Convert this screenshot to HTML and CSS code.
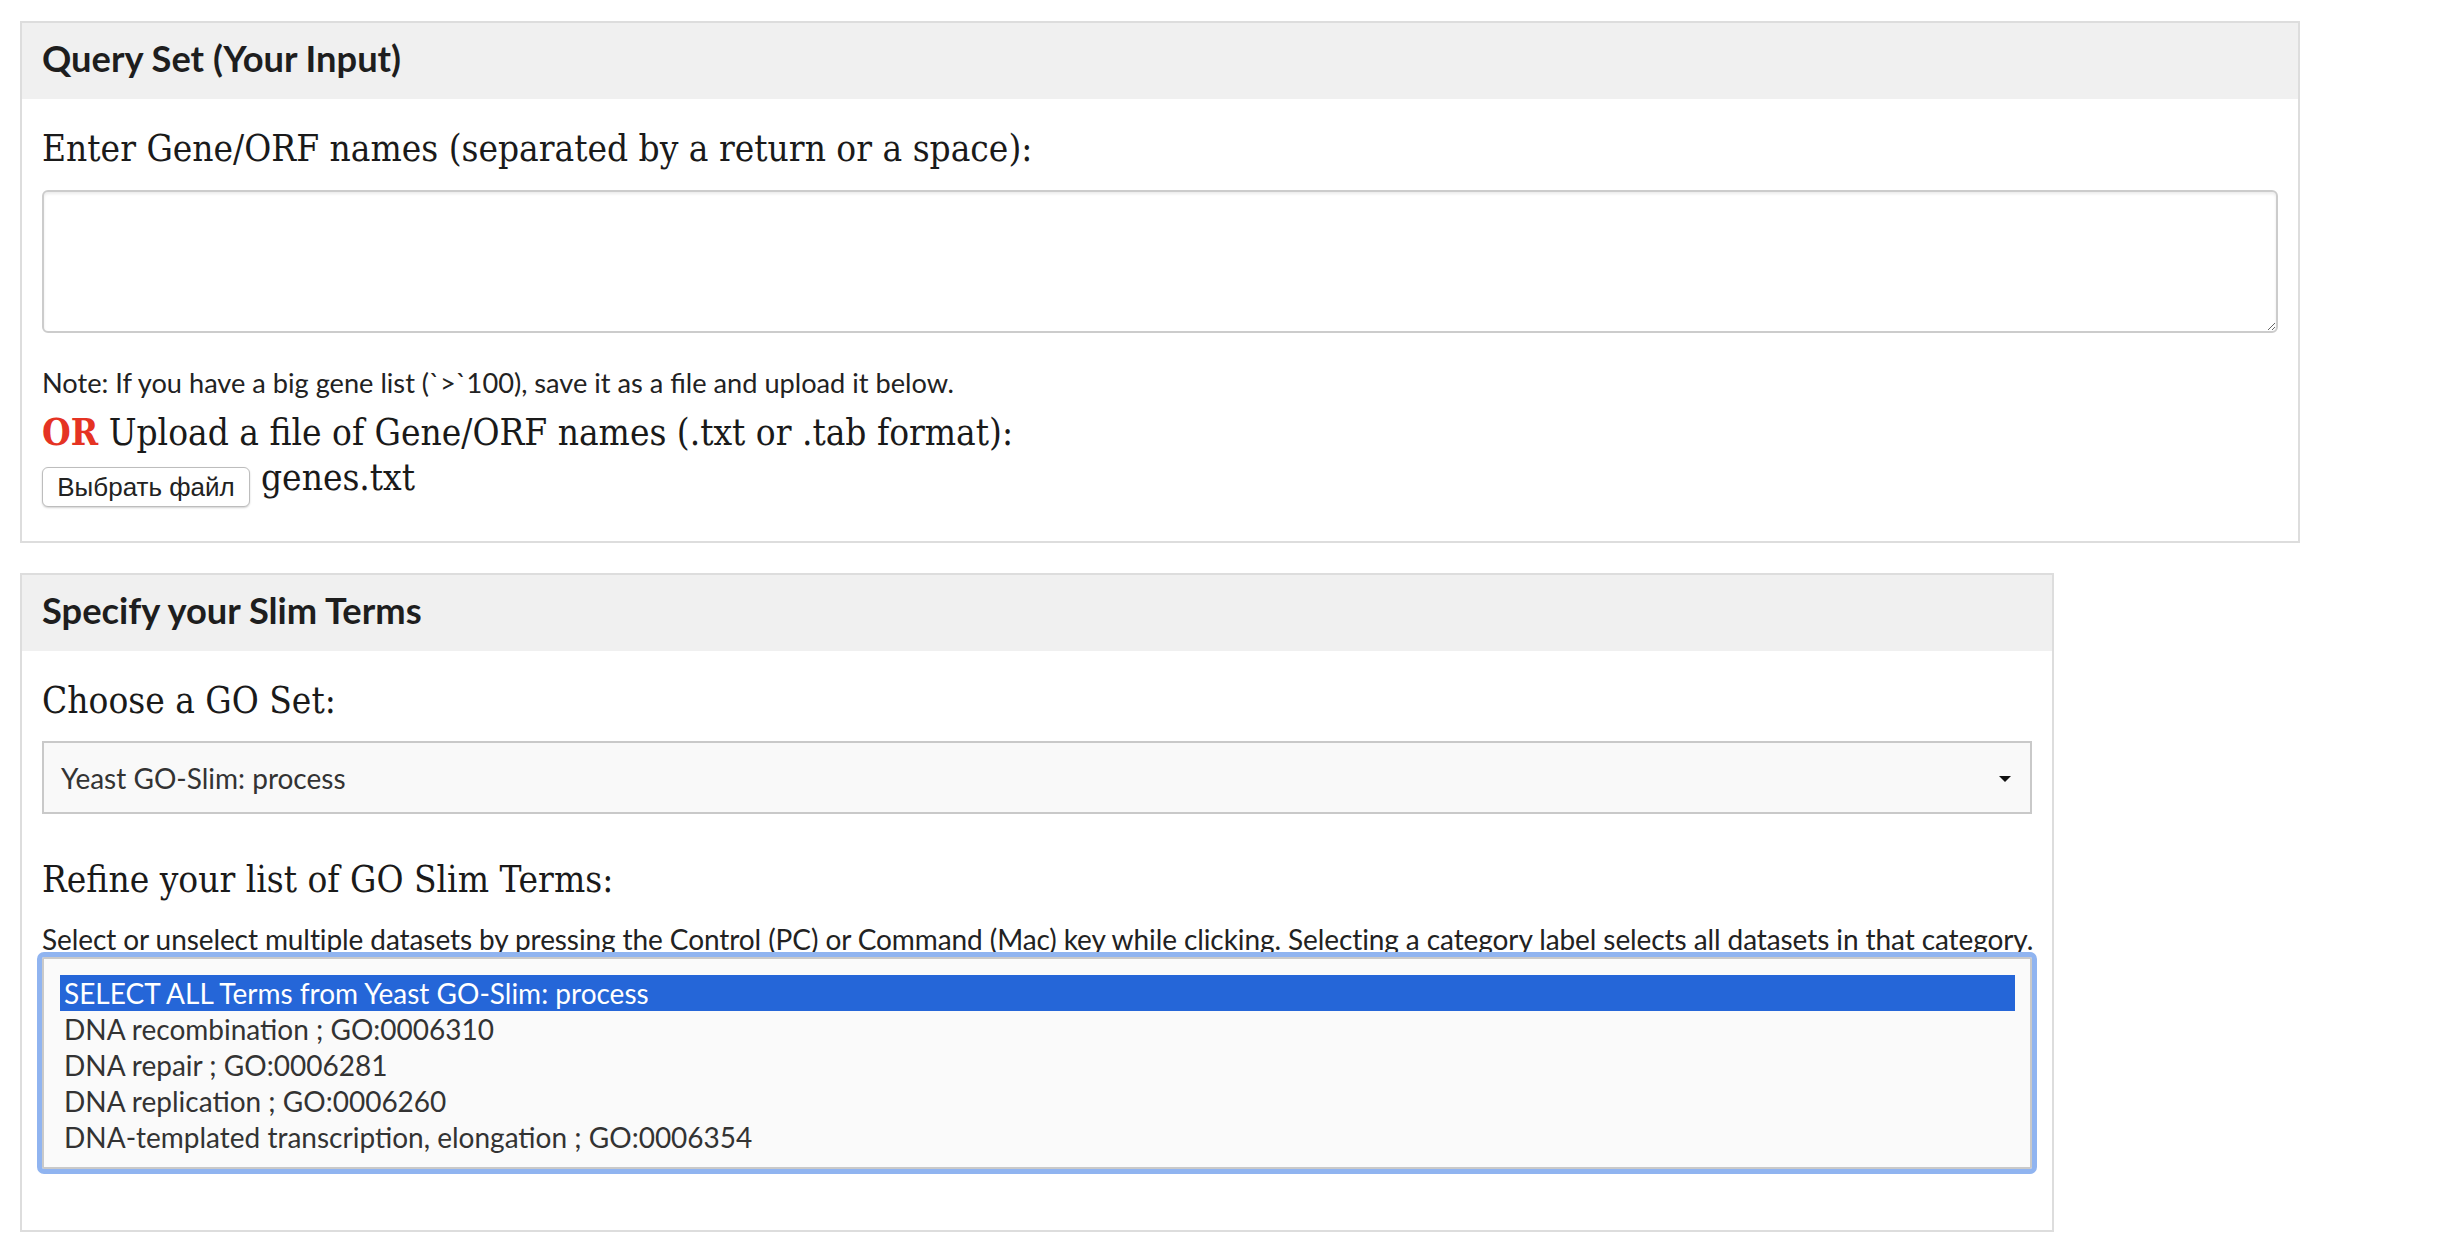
FILE: index.html
```html
<!DOCTYPE html>
<html lang="en">
<head>
<meta charset="utf-8">
<title>GO Slim Mapper</title>
<link rel="stylesheet" href="styles.css">
</head>
<body>
<div class="page">
  <section class="panel panel-query">
    <div class="panel-heading"><h3 class="panel-title">Query Set (Your Input)</h3></div>
    <div class="panel-body">
      <label class="field-label">Enter Gene/ORF names (separated by a return or a space):</label>
      <textarea class="gene-input"></textarea>
      <p class="note">Note: If you have a big gene list (`&gt;`100), save it as a file and upload it below.</p>
      <p class="field-label upload-label"><span class="or">OR</span> Upload a file of Gene/ORF names (.txt or .tab format):</p>
      <div class="file-row">
        <button class="file-btn" type="button">Выбрать файл</button>
        <span class="file-name">genes.txt</span>
      </div>
    </div>
  </section>

  <section class="panel panel-slim">
    <div class="panel-heading"><h3 class="panel-title">Specify your Slim Terms</h3></div>
    <div class="panel-body">
      <label class="field-label">Choose a GO Set:</label>
      <div class="select-box">
        <span class="select-value">Yeast GO-Slim: process</span>
        <span class="select-arrow"></span>
      </div>
      <p class="field-label refine-label">Refine your list of GO Slim Terms:</p>
      <p class="help">Select or unselect multiple datasets by pressing the Control (PC) or Command (Mac) key while clicking. Selecting a category label selects all datasets in that category.</p>
      <div class="listbox">
        <div class="option selected">SELECT ALL Terms from Yeast GO-Slim: process</div>
        <div class="option">DNA recombination ; GO:0006310</div>
        <div class="option">DNA repair ; GO:0006281</div>
        <div class="option">DNA replication ; GO:0006260</div>
        <div class="option">DNA-templated transcription, elongation ; GO:0006354</div>
      </div>
    </div>
  </section>
</div>
</body>
</html>
```

FILE: styles.css
```css
* {
  box-sizing: border-box;
}

html, body {
  margin: 0;
  padding: 0;
  background: #ffffff;
}

body {
  font-family: Lato, "Noto Sans", sans-serif;
  color: #222222;
}

.page {
  padding: 21px 0 0 20px;
  display: flex;
  flex-direction: column;
  align-items: flex-start;
  gap: 30px;
}

.panel {
  border: 2px solid #dddddd;
  background: #ffffff;
}

.panel-query {
  width: 2280px;
}

.panel-slim {
  width: 2034px;
}

.panel-heading {
  background: #f0f0f0;
  height: 76px;
  padding: 10px 20px 16px;
}

.panel-title {
  margin: 0;
  font-family: Lato, sans-serif;
  font-weight: 700;
  font-size: 36.3px;
  line-height: 50px;
  color: #1e1e1e;
}

.panel-body {
  padding: 24px 20px 34px;
  display: flex;
  flex-direction: column;
}

.panel-slim .panel-body {
  padding-bottom: 61px;
}

.field-label {
  display: block;
  margin: 0;
  font-family: "DejaVu Serif Condensed", "DejaVu Serif", serif;
  font-stretch: semi-condensed;
  font-size: 36.7px;
  line-height: 52px;
  color: #1a1a1a;
}

.gene-input {
  display: block;
  margin: 15px 0 0;
  width: 100%;
  height: 143px;
  border: 2px solid #cccccc;
  border-radius: 6px;
  box-shadow: inset 0 2px 3px rgba(0, 0, 0, 0.08);
  background: #ffffff;
  resize: vertical;
  font-family: Lato, sans-serif;
  font-size: 28px;
}

.note {
  margin: 30px 0 0;
  font-size: 27.2px;
  line-height: 40px;
  color: #222222;
}

.upload-label {
  margin-top: 5px;
  line-height: 50px;
}

.or {
  color: #e53323;
  font-weight: 700;
}

.file-row {
  margin-top: 9px;
  height: 40px;
  display: flex;
  align-items: flex-start;
  gap: 11px;
}

.file-btn {
  height: 40px;
  width: 208px;
  padding: 0;
  border: 1px solid #bdbdbd;
  border-radius: 6px;
  background: #ffffff;
  box-shadow: 0 1px 2px rgba(0, 0, 0, 0.18);
  font-family: "Liberation Sans", Arial, sans-serif;
  font-size: 26px;
  color: #222222;
}

.file-name {
  font-family: "DejaVu Serif Condensed", "DejaVu Serif", serif;
  font-stretch: semi-condensed;
  font-size: 36.7px;
  line-height: 22px;
  color: #1a1a1a;
}

.select-box {
  position: relative;
  margin-top: 14px;
  height: 73px;
  border: 2px solid #c9c9c9;
  background: #f9f9f9;
  display: flex;
  align-items: center;
  padding: 0 17px;
}

.select-value {
  font-size: 28px;
  color: #333333;
}

.select-arrow {
  position: absolute;
  right: 19px;
  top: 33px;
  width: 0;
  height: 0;
  border-left: 6px solid transparent;
  border-right: 6px solid transparent;
  border-top: 6px solid #111111;
}

.refine-label {
  margin-top: 40px;
}

.help {
  margin: 15px 0 0;
  font-size: 28px;
  line-height: 36px;
  letter-spacing: -0.09px;
  color: #222222;
  white-space: nowrap;
}

.listbox {
  margin-top: 0;
  height: 212px;
  border: 2px solid #c9c9c9;
  border-radius: 2px;
  outline: 5px solid #90b4f0;
  background: #fafafa;
  padding: 16px 15px 12px 16px;
}

.option {
  height: 36px;
  line-height: 36px;
  padding: 0 4px;
  font-size: 28px;
  color: #333333;
  white-space: nowrap;
}

.option.selected {
  background: #2566d8;
  color: #ffffff;
}
```
